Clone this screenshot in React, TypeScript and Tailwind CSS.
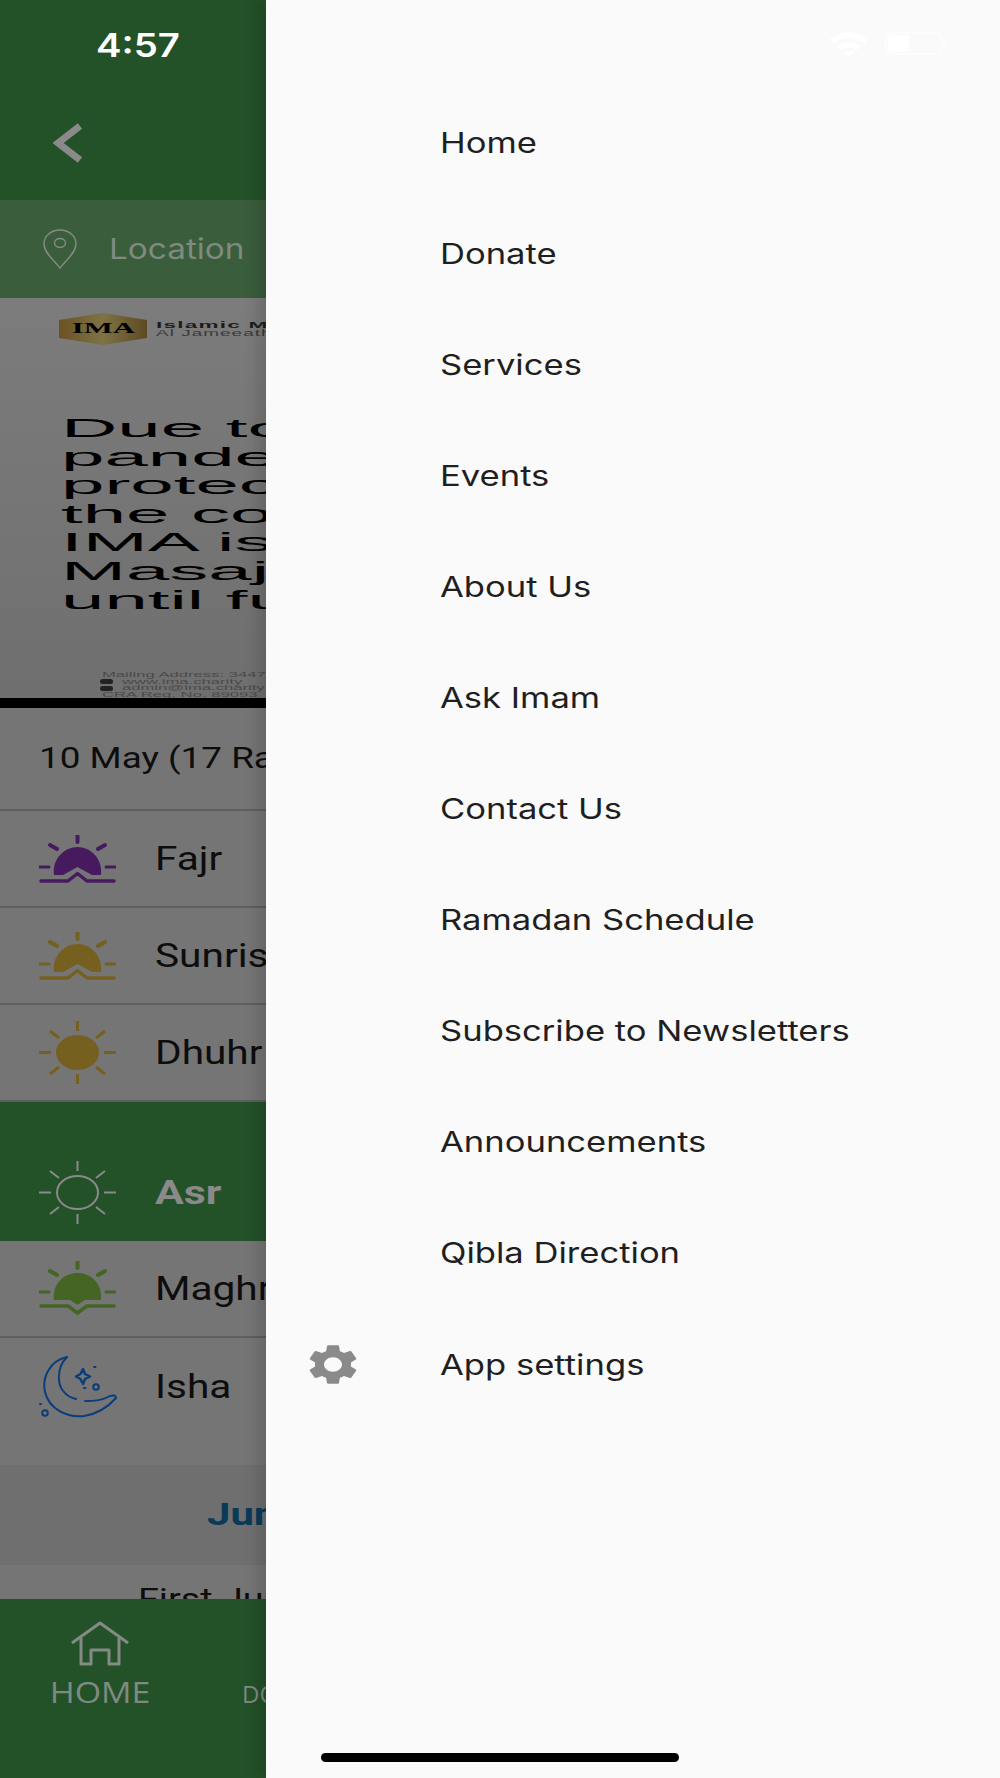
import type { ReactNode } from 'react'

const menu = [
  'Home',
  'Donate',
  'Services',
  'Events',
  'About Us',
  'Ask Imam',
  'Contact Us',
  'Ramadan Schedule',
  'Subscribe to Newsletters',
  'Announcements',
  'Qibla Direction',
  'App settings',
]

function Rays({ color, cy }: { color: string; cy: number }) {
  const lines = [
    [38.5, 1, 38.5, 7],
    [11, 10, 18, 14],
    [66, 10, 59, 14],
  ]
  return (
    <>
      {lines.map((l) => (
        <line key={l.join()} x1={l[0]} y1={l[1]} x2={l[2]} y2={l[3]} stroke={color} strokeWidth="4" strokeLinecap="round" />
      ))}
      <line x1="1" y1={cy} x2="10" y2={cy} stroke={color} strokeWidth="3" strokeLinecap="round" />
      <line x1="67" y1={cy} x2="76" y2={cy} stroke={color} strokeWidth="3" strokeLinecap="round" />
    </>
  )
}

function RiseIcon({ color }: { color: string }) {
  return (
    <svg width="77" height="48" viewBox="0 0 77 48" fill="none">
      <Rays color={color} cy={32} />
      <path d="M15 40C13 23 26 12 38.5 12C51 12 64 23 62 40H53L38.5 32L24 40Z" fill={color} />
      <path d="M2 46H29L38.5 38.5L48 46H75" stroke={color} strokeWidth="3.5" strokeLinecap="round" strokeLinejoin="round" />
    </svg>
  )
}

function SetIcon({ color }: { color: string }) {
  return (
    <svg width="77" height="55" viewBox="0 0 77 55" fill="none">
      <Rays color={color} cy={31} />
      <path d="M15 39C13 22 26 12 38.5 12C51 12 64 22 62 39H46L38.5 44L31 39Z" fill={color} />
      <path d="M2 45H29L38.5 52L48 45H75" stroke={color} strokeWidth="3.5" strokeLinecap="round" strokeLinejoin="round" />
    </svg>
  )
}

function SunIcon({ color, filled }: { color: string; filled?: boolean }) {
  return (
    <svg width="77" height="63" viewBox="0 0 77 63" fill="none" stroke={color} strokeWidth={filled ? 3 : 2}>
      <path d="M38.5 0V10M38.5 53V63M0 31.5H12M65 31.5H77M11 10L20 17M66 10L57 17M11 53L20 46M66 53L57 46" />
      {filled ? (
        <ellipse cx="38.5" cy="31.5" rx="21.5" ry="17.5" fill={color} stroke="none" />
      ) : (
        <ellipse cx="38.5" cy="31.5" rx="20.5" ry="16.5" />
      )}
    </svg>
  )
}

function MoonIcon({ color }: { color: string }) {
  return (
    <svg width="79" height="62" viewBox="0 0 79 62" fill="none" stroke={color} strokeWidth="2" strokeLinecap="round" strokeLinejoin="round">
      <path d="M28 1C10 5 3 22 6 36C10 53 28 62 45 60C58 58 69 51 77 42C77 39 74 39 71 40C62 45 54 45 46 45" />
      <path d="M37 43C27 41 19 32 20 20C20 12 23 6 28 1" />
      <path d="M44 13L46 18L51 20.5L46 23L44 28L41.5 23L37 20.5L41.5 18Z" strokeWidth="2.5" />
      <circle cx="57" cy="31" r="2.8" />
      <circle cx="6" cy="57" r="2.8" />
      <path d="M55 11H56.5M45 32H46.5M1 48H2" />
    </svg>
  )
}

function PrayerRow({ icon, name, last }: { icon: ReactNode; name: string; last?: boolean }) {
  return (
    <div className={last ? 'flex h-[97px] shrink-0 items-center pl-[39px]' : 'flex h-[97px] shrink-0 items-center border-b-[2px] border-[#5f5f5f] pl-[39px]'}>
      <div className="flex w-[116px] shrink-0 items-center">{icon}</div>
      <span className="inline-block origin-left scale-x-[1.23] whitespace-nowrap text-[33px] text-[#0d0d0d]">{name}</span>
    </div>
  )
}

function Flyer() {
  const lines = ['Due to the', 'pandemic', 'protection', 'the community', 'IMA is closing', 'Masajid', 'until further']
  const small = 'inline-block origin-left scale-x-[2.08] whitespace-nowrap text-[8px] leading-[6.5px]'
  return (
    <div className="h-[400px] overflow-hidden bg-gradient-to-b from-[#7c7c7c] to-[#6f6f6f] font-['Liberation_Sans',sans-serif]">
      <div className="flex items-center pl-[59px] pt-[15px]">
        <div className="flex h-[32px] w-[88px] shrink-0 items-center justify-center bg-gradient-to-r from-[#6b5224] via-[#7d7345] to-[#5f4a22] [clip-path:polygon(0_22%,50%_0,100%_22%,100%_78%,50%_100%,0_78%)]">
          <span className="inline-block scale-x-[2.2] font-['Liberation_Serif',serif] text-[14px] font-bold leading-none text-black">IMA</span>
        </div>
        <div className="ml-[9px] flex flex-col whitespace-nowrap">
          <span className="inline-block origin-left scale-x-[2.5] text-[9px] font-bold leading-[8px] tracking-[0.5px] text-[#1c1c1c]">Islamic Mission</span>
          <span className="inline-block origin-left scale-x-[2.1] text-[9px] leading-[8px] tracking-[0.5px] text-[#3a3a3a]">Al Jameeath</span>
        </div>
      </div>
      <div className="mt-[69px] flex flex-col pl-[61px]">
        {lines.map((line) => (
          <span key={line} className="inline-block origin-left scale-x-[3] whitespace-nowrap text-[26px] leading-[28.6px] text-black">
            {line}
          </span>
        ))}
      </div>
      <div className="mt-[58px] flex flex-col pl-[102px] text-[#4a4a4a]">
        <span className={small}>Mailing Address: 3447</span>
        <div className="flex items-center">
          <span className="ml-[-2px] h-[5px] w-[13px] shrink-0 rounded-full bg-[#222222]" />
          <span className={`${small} ml-[9px]`}>www.ima.charity</span>
        </div>
        <div className="flex items-center">
          <span className="ml-[-2px] h-[5px] w-[13px] shrink-0 rounded-full bg-[#222222]" />
          <span className={`${small} ml-[9px]`}>admin@ima.charity</span>
        </div>
        <span className={small}>CRA Reg. No. 89093</span>
      </div>
    </div>
  )
}

function LeftScreen() {
  return (
    <div className="flex h-[1778px] w-[266px] shrink-0 flex-col overflow-hidden bg-[#757575] font-['Roboto',sans-serif]">
      {/* header */}
      <div className="flex h-[200px] shrink-0 flex-col items-start bg-[#235128] pt-[26px]">
        <span className="ml-[96px] inline-block origin-left scale-x-[1.16] font-['Inter',sans-serif] text-[33px] font-semibold leading-[38px] text-white">4:57</span>
        <svg className="ml-[53px] mt-[59px]" width="30" height="40" viewBox="0 0 30 40" fill="none">
          <path d="M27 3L5 20L27 37" stroke="#8a8a8a" strokeWidth="7" />
        </svg>
      </div>
      <div className="flex h-[98px] shrink-0 items-center bg-[#3a5d3c] pl-[43px]">
        <svg width="34" height="40" viewBox="0 0 34 40" fill="none" stroke="#868b86" strokeWidth="1.4">
          <path d="M17 39C12 32 1 24 1 15C1 7 8 1 17 1C26 1 33 7 33 15C33 24 22 32 17 39Z" />
          <ellipse cx="17" cy="14" rx="5.5" ry="4.5" />
        </svg>
        <span className="ml-[32px] inline-block origin-left scale-x-[1.19] whitespace-nowrap font-['Inter',sans-serif] text-[28px] text-[#7f8a80]">Location</span>
      </div>
      <Flyer />
      <div className="h-[10px] shrink-0 bg-black" />
      <div className="flex h-[103px] shrink-0 items-center border-b-[2px] border-[#5f5f5f] pl-[39px]">
        <span className="inline-block origin-left scale-x-[1.27] whitespace-nowrap text-[29px] text-[#0d0d0d]">10 May (17 Ramadan)</span>
      </div>
      <PrayerRow icon={<RiseIcon color="#471a60" />} name="Fajr" />
      <PrayerRow icon={<RiseIcon color="#75601f" />} name="Sunrise" />
      <PrayerRow icon={<SunIcon color="#75601f" filled />} name="Dhuhr" />
      <div className="flex h-[139px] shrink-0 items-center bg-[#235128] pl-[39px] pt-[42px]">
        <div className="flex w-[116px] shrink-0 items-center">
          <SunIcon color="#8a8a8a" />
        </div>
        <span className="inline-block origin-left scale-x-[1.3] text-[33px] font-bold text-[#8a8a8a]">Asr</span>
      </div>
      <PrayerRow icon={<SetIcon color="#456525" />} name="Maghrib" />
      <PrayerRow icon={<MoonIcon color="#0b3c7c" />} name="Isha" last />
      <div className="h-[30px] shrink-0" />
      <div className="flex h-[100px] shrink-0 items-center bg-[#6f6f6f] pl-[207px]">
        <span className="inline-block origin-left scale-x-[1.35] whitespace-nowrap text-[31px] font-bold text-[#093a58]">Jumu'ah</span>
      </div>
      <div className="h-[34px] shrink-0 overflow-hidden pl-[138px] pt-[17px]">
        <span className="inline-block origin-left scale-x-[1.3] whitespace-nowrap text-[29px] leading-[34px] text-[#0d0d0d]">First Jumu'ah</span>
      </div>
      {/* bottom tabs */}
      <div className="flex h-[179px] shrink-0 items-start bg-[#235128] pt-[22px] font-['Open_Sans',sans-serif]">
        <div className="flex w-[200px] shrink-0 flex-col items-center">
          <svg width="58" height="46" viewBox="0 0 58 46" fill="none" stroke="#858a85" strokeWidth="3" strokeLinejoin="round">
            <path d="M1 22L29 2L57 22" />
            <path d="M10 17V43H20V29H38V43H48V17" />
          </svg>
          <span className="mt-[7px] inline-block scale-x-[1.17] text-[29px] leading-[36px] text-[#7f8a80]">HOME</span>
        </div>
        <span className="ml-[42px] mt-[58px] text-[24px] leading-[30px] text-[#7f8a80]">DONATE</span>
      </div>
    </div>
  )
}

function Drawer() {
  return (
    <div className="relative z-10 flex h-[1778px] flex-1 flex-col bg-[#fafafa] shadow-[-8px_0_14px_rgba(0,0,0,0.14)]">
      <div className="flex h-[87px] shrink-0 items-start justify-end pr-[54px] pt-[32px]">
        <svg width="38" height="25" viewBox="0 0 39 25" fill="white">
          <path d="M19.5 0C12 0 5.5 2.5 0 7L4 11C8 8 13.5 6 19.5 6C25.5 6 31 8 35 11L39 7C33.5 2.5 27 0 19.5 0Z" />
          <path d="M19.5 10C15 10 11 11.5 7.5 14.5L11.5 18C14 16.5 16.5 15.5 19.5 15.5C22.5 15.5 25 16.5 27.5 18L31.5 14.5C28 11.5 24 10 19.5 10Z" />
          <path d="M19.5 19C17.5 19 16 19.5 14.5 20.5L19.5 25L24.5 20.5C23 19.5 21.5 19 19.5 19Z" />
        </svg>
        <div className="ml-[17px] flex h-[23px] w-[57px] rounded-[7px] border-[2px] border-[#fdfdfd] p-[1px]">
          <div className="h-full w-[21px] rounded-[3px] bg-white" />
        </div>
        <div className="ml-[1px] mt-[8px] h-[7px] w-[3px] rounded-r-sm bg-[#fdfdfd]" />
      </div>
      <div className="flex flex-col">
        {menu.map((item) => (
          <div key={item} className="flex h-[111.1px] items-center">
            <div className="flex w-[175px] shrink-0 justify-start pl-[43px]">
              {item === 'App settings' && (
                <svg width="48" height="41" viewBox="2.4 1.8 19.2 20.4" preserveAspectRatio="none" fill="#8a8a8a">
                  <path d="M19.14 12.94c.04-.3.06-.61.06-.94 0-.32-.02-.64-.07-.94l2.03-1.58c.18-.14.23-.41.12-.61l-1.92-3.32c-.12-.22-.37-.29-.59-.22l-2.39.96c-.5-.38-1.03-.7-1.62-.94l-.36-2.54c-.04-.24-.24-.41-.48-.41h-3.84c-.24 0-.43.17-.47.41l-.36 2.54c-.59.24-1.13.57-1.62.94l-2.39-.96c-.22-.08-.47 0-.59.22L2.74 8.87c-.12.21-.08.47.12.61l2.03 1.58c-.05.3-.09.63-.09.94s.02.64.07.94l-2.03 1.58c-.18.14-.23.41-.12.61l1.92 3.32c.12.22.37.29.59.22l2.39-.96c.5.38 1.03.7 1.62.94l.36 2.54c.05.24.24.41.48.41h3.84c.24 0 .44-.17.47-.41l.36-2.54c.59-.24 1.13-.56 1.62-.94l2.39.96c.22.08.47 0 .59-.22l1.92-3.32c.12-.22.07-.47-.12-.61l-2.01-1.58zM12 15.6c-1.98 0-3.6-1.62-3.6-3.6s1.62-3.6 3.6-3.6 3.6 1.62 3.6 3.6-1.62 3.6-3.6 3.6z" />
                </svg>
              )}
            </div>
            <span className="-ml-[1px] inline-block origin-left scale-x-[1.235] whitespace-nowrap font-['Inter',sans-serif] text-[28px] text-[#1f1f1f]">{item}</span>
          </div>
        ))}
      </div>
    </div>
  )
}

export default function App() {
  return (
    <div className="relative flex h-[1778px] w-[1000px] overflow-hidden">
      <LeftScreen />
      <Drawer />
      {/* iOS home indicator sits over everything */}
      <div className="absolute bottom-[16px] left-[321px] z-20 h-[9px] w-[358px] rounded-full bg-black" />
    </div>
  )
}
